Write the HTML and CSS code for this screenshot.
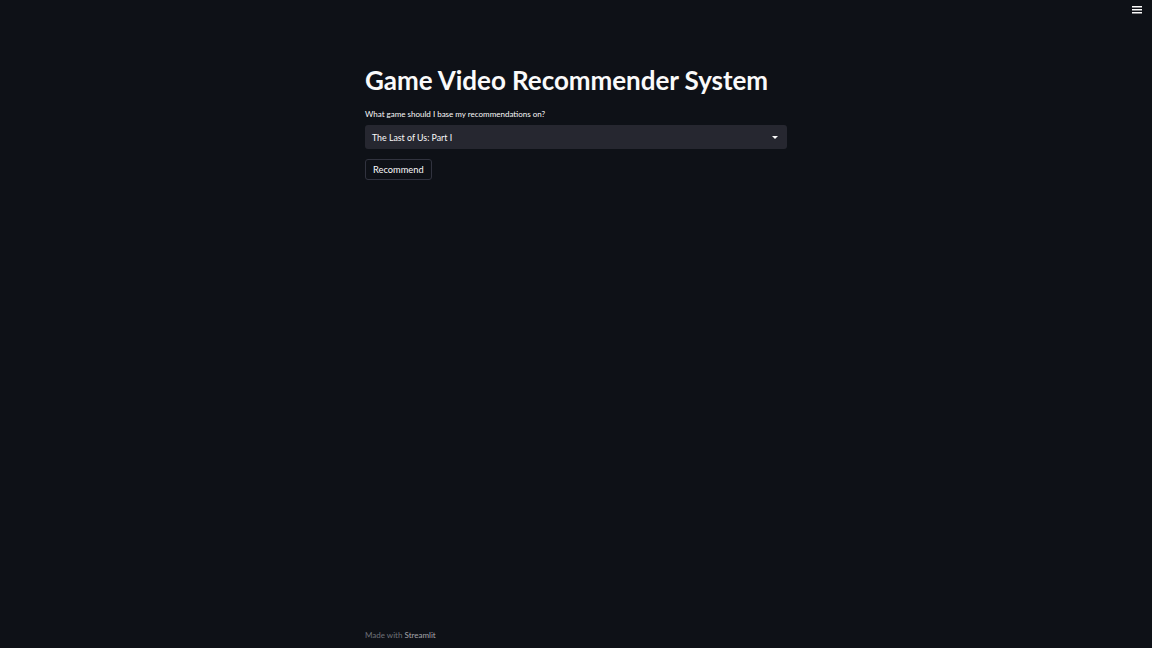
FILE: index.html
```html
<!DOCTYPE html>
<html>
<head>
<meta charset="utf-8">
<link rel="stylesheet" href="styles.css">
</head>
<body>
<header class="topbar">
  <svg class="menu" width="10" height="8" viewBox="0 0 10 8"><rect x="0" y="0" width="10" height="1.5" fill="#fafafa"/><rect x="0" y="3" width="10" height="1.5" fill="#fafafa"/><rect x="0" y="6" width="10" height="1.5" fill="#fafafa"/></svg>
</header>
<main class="main">
  <h1 class="title">Game Video Recommender System</h1>
  <label class="label">What game should I base my recommendations on?</label>
  <div class="select">
    <span class="select-value">The Last of Us: Part I</span>
    <svg class="caret" width="6" height="3" viewBox="0 0 6 3"><path d="M0 0 L6 0 L3 3 Z" fill="#fafafa"/></svg>
  </div>
  <button class="btn">Recommend</button>
</main>
<footer class="footer">Made with <span class="brand">Streamlit</span></footer>
</body>
</html>
```
FILE: styles.css
```css
html, body {
  margin: 0;
  padding: 0;
  height: 100%;
}
body {
  background: #0e1117;
  color: #fafafa;
  font-family: "Source Sans Pro", Lato, "Noto Sans", sans-serif;
  display: flex;
  flex-direction: column;
  width: 1152px;
  height: 648px;
  overflow: hidden;
}
.topbar {
  height: 20px;
  display: flex;
  justify-content: flex-end;
  align-items: flex-start;
  padding: 6px 10px 0 0;
  box-sizing: border-box;
}
.main {
  width: 422px;
  margin: 0 auto;
  padding-top: 45px;
  display: flex;
  flex-direction: column;
  align-items: flex-start;
  flex: 1;
}
.title {
  margin: 0;
  font-size: 26px;
  font-weight: 700;
  line-height: 30px;
  letter-spacing: -0.05px;
  color: #fafafa;
}
.label {
  margin-top: 13px;
  font-size: 8px;
  line-height: 12px;
  color: #fafafa;
}
.select {
  margin-top: 5px;
  width: 422px;
  height: 24px;
  background: #262730;
  border-radius: 3px;
  display: flex;
  align-items: center;
  justify-content: space-between;
  padding: 0 9px 0 7px;
  box-sizing: border-box;
}
.select-value {
  font-size: 8.8px;
  color: #fafafa;
}
.caret {
  display: block;
}
.btn {
  margin-top: 10px;
  height: 21px;
  padding: 0 7px;
  background: #0e1117;
  color: #fafafa;
  border: 1px solid #31333f;
  border-radius: 3px;
  font-family: inherit;
  font-size: 9.3px;
}
.footer {
  width: 422px;
  margin: 0 auto;
  padding-bottom: 8px;
  font-size: 8px;
  color: #6f7179;
}
.brand {
  color: #a5a6ab;
}
```
